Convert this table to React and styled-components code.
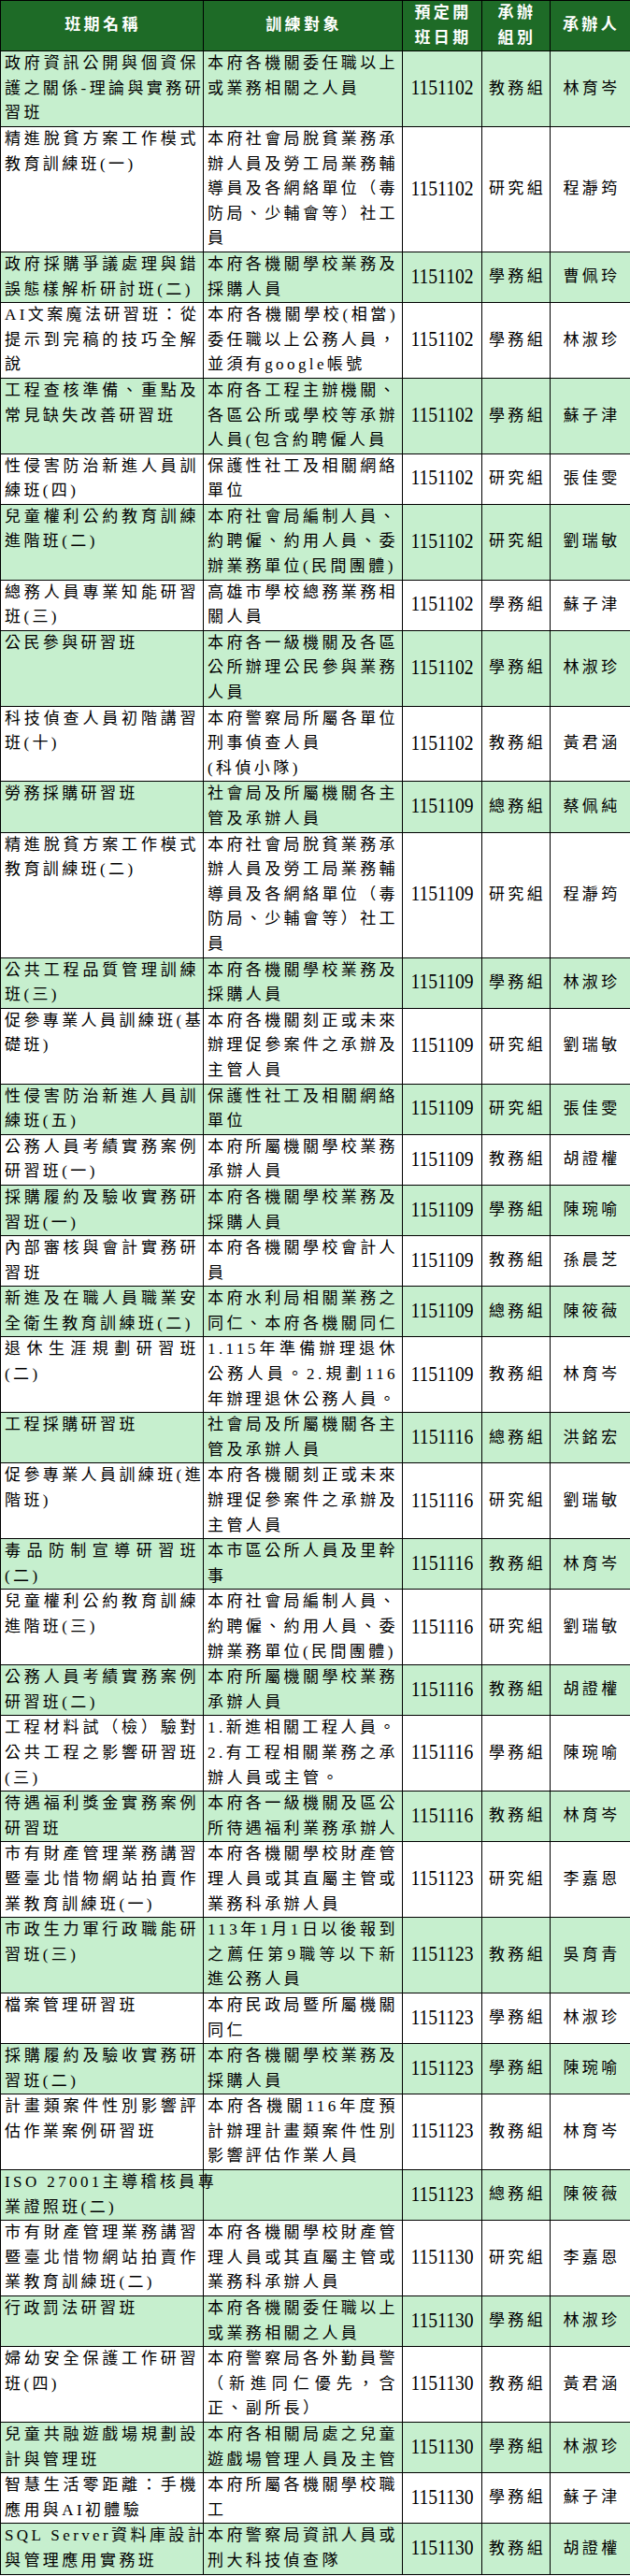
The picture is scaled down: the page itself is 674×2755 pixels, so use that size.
import React from "react";
import styled, { createGlobalStyle } from "styled-components";

const GlobalStyle = createGlobalStyle`
  html, body { margin: 0; padding: 0; background: #ffffff; }
  body { font-family: "Liberation Serif", "Noto Sans CJK TC", serif; color: #000; }
`;

const Table = styled.table`
  width: 674px;
  border-collapse: collapse;
  table-layout: fixed;
  font-family: "Liberation Serif", "Noto Sans CJK TC", serif;
  font-size: 17px;
  line-height: 26.6px;
  letter-spacing: 3.4px;
`;

const Col = styled.col`
  width: ${(p) => p.$w}px;
`;

const HeadCell = styled.th`
  background: #1e6b27;
  color: #ffffff;
  font-weight: 700;
  text-align: center;
  vertical-align: middle;
  border: 1px solid #000;
  padding: 0 2px 0 4px;
  white-space: nowrap;
`;

const Row = styled.tr`
  background: ${(p) => (p.$alt ? "#c6efce" : "#ffffff")};
`;

const TextCell = styled.td`
  border: 1px solid #000;
  padding: 0 4px;
  vertical-align: top;
  text-align: left;
`;

const MidCell = styled.td`
  border: 1px solid #000;
  padding: 0 0 0 3px;
  vertical-align: middle;
  text-align: center;
  white-space: nowrap;
`;

const DateText = styled.span`
  display: inline-block;
  font-family: "Liberation Serif", serif;
  font-size: 19.6px;
  letter-spacing: 0;
  transform: scaleY(1.15);
  margin-left: -3px;
`;

const Line = styled.span`
  display: block;
  white-space: nowrap;
  text-align: left;
  text-align-last: ${(p) => (p.$fill ? "justify" : "left")};
`;

const rows = [
  [["政府資訊公開與個資保", "護之關係-理論與實務研", "習班"], ["本府各機關委任職以上", "或業務相關之人員"], "1151102", "教務組", "林育岑"],
  [["精進脫貧方案工作模式", "教育訓練班(一)"], ["本府社會局脫貧業務承", "辦人員及勞工局業務輔", "導員及各網絡單位（毒", "防局、少輔會等）社工", "員"], "1151102", "研究組", "程瀞筠"],
  [["政府採購爭議處理與錯", "誤態樣解析研討班(二)"], ["本府各機關學校業務及", "採購人員"], "1151102", "學務組", "曹佩玲"],
  [["AI文案魔法研習班：從", "提示到完稿的技巧全解", "說"], ["本府各機關學校(相當)", "委任職以上公務人員，", "並須有google帳號"], "1151102", "學務組", "林淑珍"],
  [["工程查核準備、重點及", "常見缺失改善研習班"], ["本府各工程主辦機關、", "各區公所或學校等承辦", "人員(包含約聘僱人員"], "1151102", "學務組", "蘇子津"],
  [["性侵害防治新進人員訓", "練班(四)"], ["保護性社工及相關網絡", "單位"], "1151102", "研究組", "張佳雯"],
  [["兒童權利公約教育訓練", "進階班(二)"], ["本府社會局編制人員、", "約聘僱、約用人員、委", "辦業務單位(民間團體)"], "1151102", "研究組", "劉瑞敏"],
  [["總務人員專業知能研習", "班(三)"], ["高雄市學校總務業務相", "關人員"], "1151102", "學務組", "蘇子津"],
  [["公民參與研習班"], ["本府各一級機關及各區", "公所辦理公民參與業務", "人員"], "1151102", "學務組", "林淑珍"],
  [["科技偵查人員初階講習", "班(十)"], ["本府警察局所屬各單位", { t: "刑事偵查人員", nofill: true }, "(科偵小隊)"], "1151102", "教務組", "黃君涵"],
  [["勞務採購研習班"], ["社會局及所屬機關各主", "管及承辦人員"], "1151109", "總務組", "蔡佩純"],
  [["精進脫貧方案工作模式", "教育訓練班(二)"], ["本府社會局脫貧業務承", "辦人員及勞工局業務輔", "導員及各網絡單位（毒", "防局、少輔會等）社工", "員"], "1151109", "研究組", "程瀞筠"],
  [["公共工程品質管理訓練", "班(三)"], ["本府各機關學校業務及", "採購人員"], "1151109", "學務組", "林淑珍"],
  [["促參專業人員訓練班(基", "礎班)"], ["本府各機關刻正或未來", "辦理促參案件之承辦及", "主管人員"], "1151109", "研究組", "劉瑞敏"],
  [["性侵害防治新進人員訓", "練班(五)"], ["保護性社工及相關網絡", "單位"], "1151109", "研究組", "張佳雯"],
  [["公務人員考績實務案例", "研習班(一)"], ["本府所屬機關學校業務", "承辦人員"], "1151109", "教務組", "胡證權"],
  [["採購履約及驗收實務研", "習班(一)"], ["本府各機關學校業務及", "採購人員"], "1151109", "學務組", "陳琬喻"],
  [["內部審核與會計實務研", "習班"], ["本府各機關學校會計人", "員"], "1151109", "教務組", "孫晨芝"],
  [["新進及在職人員職業安", "全衛生教育訓練班(二)"], ["本府水利局相關業務之", "同仁、本府各機關同仁"], "1151109", "總務組", "陳筱薇"],
  [["退休生涯規劃研習班", "(二)"], ["1.115年準備辦理退休", "公務人員。2.規劃116", "年辦理退休公務人員。"], "1151109", "教務組", "林育岑"],
  [["工程採購研習班"], ["社會局及所屬機關各主", "管及承辦人員"], "1151116", "總務組", "洪銘宏"],
  [["促參專業人員訓練班(進", "階班)"], ["本府各機關刻正或未來", "辦理促參案件之承辦及", "主管人員"], "1151116", "研究組", "劉瑞敏"],
  [["毒品防制宣導研習班", "(二)"], ["本市區公所人員及里幹", "事"], "1151116", "教務組", "林育岑"],
  [["兒童權利公約教育訓練", "進階班(三)"], ["本府社會局編制人員、", "約聘僱、約用人員、委", "辦業務單位(民間團體)"], "1151116", "研究組", "劉瑞敏"],
  [["公務人員考績實務案例", "研習班(二)"], ["本府所屬機關學校業務", "承辦人員"], "1151116", "教務組", "胡證權"],
  [["工程材料試（檢）驗對", "公共工程之影響研習班", "(三)"], ["1.新進相關工程人員。", "2.有工程相關業務之承", "辦人員或主管。"], "1151116", "學務組", "陳琬喻"],
  [["待遇福利獎金實務案例", "研習班"], ["本府各一級機關及區公", "所待遇福利業務承辦人"], "1151116", "教務組", "林育岑"],
  [["市有財產管理業務講習", "暨臺北惜物網站拍賣作", "業教育訓練班(一)"], ["本府各機關學校財產管", "理人員或其直屬主管或", "業務科承辦人員"], "1151123", "研究組", "李嘉恩"],
  [["市政生力軍行政職能研", "習班(三)"], ["113年1月1日以後報到", "之薦任第9職等以下新", "進公務人員"], "1151123", "教務組", "吳育青"],
  [["檔案管理研習班"], ["本府民政局暨所屬機關", "同仁"], "1151123", "學務組", "林淑珍"],
  [["採購履約及驗收實務研", "習班(二)"], ["本府各機關學校業務及", "採購人員"], "1151123", "學務組", "陳琬喻"],
  [["計畫類案件性別影響評", "估作業案例研習班"], ["本府各機關116年度預", "計辦理計畫類案件性別", "影響評估作業人員"], "1151123", "教務組", "林育岑"],
  [["ISO 27001主導稽核員專", "業證照班(二)"], [], "1151123", "總務組", "陳筱薇"],
  [["市有財產管理業務講習", "暨臺北惜物網站拍賣作", "業教育訓練班(二)"], ["本府各機關學校財產管", "理人員或其直屬主管或", "業務科承辦人員"], "1151130", "研究組", "李嘉恩"],
  [["行政罰法研習班"], ["本府各機關委任職以上", "或業務相關之人員"], "1151130", "學務組", "林淑珍"],
  [["婦幼安全保護工作研習", "班(四)"], ["本府警察局各外勤員警", "（新進同仁優先，含", "正、副所長）"], "1151130", "教務組", "黃君涵"],
  [["兒童共融遊戲場規劃設", "計與管理班"], ["本府各相關局處之兒童", "遊戲場管理人員及主管"], "1151130", "學務組", "林淑珍"],
  [["智慧生活零距離：手機", "應用與AI初體驗"], ["本府所屬各機關學校職", "工"], "1151130", "學務組", "蘇子津"],
  [["SQL Server資料庫設計", "與管理應用實務班"], ["本府警察局資訊人員或", "刑大科技偵查隊"], "1151130", "教務組", "胡證權"],
];

function Lines({ lines }) {
  return lines.map((ln, i) => {
    const text = typeof ln === "string" ? ln : ln.t;
    const nofill = typeof ln === "object" && ln.nofill;
    const isLast = i === lines.length - 1;
    return (
      <Line key={i} $fill={!isLast && !nofill}>
        {text}
      </Line>
    );
  });
}

export default function App() {
  return (
    <>
      <GlobalStyle />
      <Table>
        <colgroup>
          <Col $w={217} />
          <Col $w={213} />
          <Col $w={85} />
          <Col $w={73} />
          <Col $w={86} />
        </colgroup>
        <thead>
          <tr>
            <HeadCell>班期名稱</HeadCell>
            <HeadCell>訓練對象</HeadCell>
            <HeadCell>
              預定開
              <br />
              班日期
            </HeadCell>
            <HeadCell>
              承辦
              <br />
              組別
            </HeadCell>
            <HeadCell>承辦人</HeadCell>
          </tr>
        </thead>
        <tbody>
          {rows.map((r, i) => (
            <Row key={i} $alt={i % 2 === 0}>
              <TextCell>
                <Lines lines={r[0]} />
              </TextCell>
              <TextCell>
                <Lines lines={r[1]} />
              </TextCell>
              <MidCell>
                <DateText>{r[2]}</DateText>
              </MidCell>
              <MidCell>{r[3]}</MidCell>
              <MidCell>{r[4]}</MidCell>
            </Row>
          ))}
        </tbody>
      </Table>
    </>
  );
}
